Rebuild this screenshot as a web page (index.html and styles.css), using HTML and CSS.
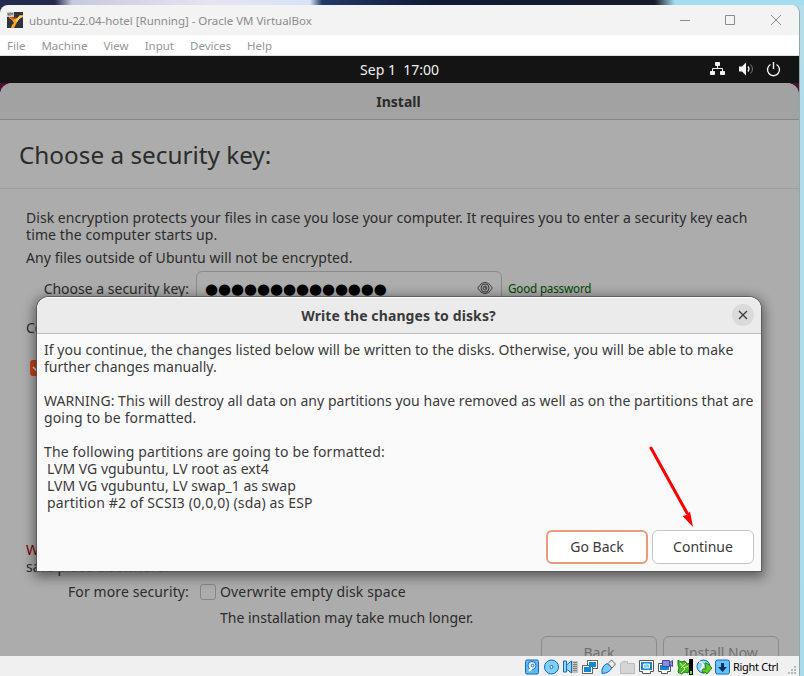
FILE: index.html
```html
<!DOCTYPE html>
<html lang="en">
<head>
<meta charset="utf-8">
<title>ubuntu-22.04-hotel [Running] - Oracle VM VirtualBox</title>
<link rel="stylesheet" href="styles.css">
</head>
<body>
<div class="vm">
  <header class="titlebar">
    <svg class="app-icon" width="16" height="16" viewBox="0 0 16 16"><rect width="16" height="16" fill="#30343c"/><path d="M3 3l4 4 3-1 3-3h3v2l-4 2-3 5-2 4H4l1-3 2-2-2-3-3-2z" fill="#f8a72c"/><path d="M4 3l3 3 2-1-2 3-4-2z" fill="#e84b16"/><path d="M9 8l4-4h3l-4 3-2 3z" fill="#ffd878"/><path d="M0 0h7v5H0z" fill="#c9c9c9"/><path d="M1 1v2h1V1m1 3V1h1l1 2 1-2" fill="none" stroke="#555" stroke-width=".7"/></svg>
    <span class="title">ubuntu-22.04-hotel [Running] - Oracle VM VirtualBox</span>
    <svg class="controls" width="104" height="12" viewBox="0 0 104 12"><path d="M0 6.5h10M45.5 1.5h9v9h-9zM91 1l10 10M101 1L91 11" fill="none" stroke="#8b8b8b"/></svg>
  </header>
  <nav class="menu"><span>File</span><span>Machine</span><span>View</span><span>Input</span><span>Devices</span><span>Help</span></nav>
  <div class="topbar">
    <span class="clock">Sep 1&nbsp; 17:00</span>
    <svg class="tray" width="72" height="16" viewBox="0 0 72 16"><g fill="#f2f2f2"><rect x="5" y="1" width="5" height="4" rx=".8"/><rect x="0" y="10" width="5" height="4" rx=".8"/><rect x="10" y="10" width="5" height="4" rx=".8"/><path d="M29 5.500h3l4-4v13l-4-4h-3z"/></g><g fill="none" stroke="#f2f2f2"><path d="M7.500 5v2.500M2.500 10V7.500h10V10"/><path d="M38 5.500q2 2.500 0 5" stroke-width="1.300"/><path d="M40.500 3.500q4 4.500 0 9" stroke="#777"/><path d="M60.500 3.500a6 6 0 1 0 6 0M63.500 1v7" stroke-width="1.400"/></g></svg>
  </div>
  <main class="screen">
    <div class="installer">
      <div class="installer-head">Install</div>
      <h1>Choose a security key:</h1>
      <div class="form">
        <p class="intro">Disk encryption protects your files in case you lose your computer. It requires you to enter a security key each</p>
        <p class="wide">time the computer starts up.</p>
        <p class="outside">Any files outside of Ubuntu will not be encrypted.</p>
        <div class="key-row"><label>Choose a security key:</label>
          <div class="entry"><span class="dots">●●●●●●●●●●●●●●</span>
            <svg width="16" height="14" viewBox="0 0 16 14" fill="none" stroke="#3b3b3b"><path d="M.7 7Q4 1.300 8 1.300T15.300 7Q12 12.700 8 12.700T.7 7z"/><circle cx="8" cy="7" r="4"/><circle cx="8" cy="7" r="1.900"/><path d="M8 5.500V7h1.500"/></svg></div>
          <span class="good">Good password</span></div>
        <p class="confirm">Confirm the security key:</p>
        <div class="check checked"><svg width="16" height="16" viewBox="0 0 16 16"><path d="M3 7l4 4 5-6" fill="none" stroke="#ddd" stroke-width="1.600"/></svg></div>
        <p class="warn">Warning:</p>
        <p class="wide">safe place elsewhere.</p>
        <div class="more"><label class="wide">For more security:</label><i class="check"></i><span class="wider">Overwrite empty disk space</span></div>
        <p class="note">The installation may take much longer.</p>
      </div>
      <div class="nav"><button>Back</button><button>Install Now</button></div>
    </div>
    <section class="dialog">
      <div class="dialog-head"><span class="wide">Write the changes to disks?</span>
        <i class="close"><svg width="10" height="10" viewBox="0 0 10 10"><path d="M1 1l8 8M9 1L1 9" stroke="#3d3d3d" stroke-width="1.300"/></svg></i></div>
      <div class="dialog-text">
        <p class="intro">If you continue, the changes listed below will be written to the disks. Otherwise, you will be able to make</p>
        <p>further changes manually.</p>
        <p class="para intro">WARNING: This will destroy all data on any partitions you have removed as well as on the partitions that are</p>
        <p class="wider">going to be formatted.</p>
        <p class="para wider">The following partitions are going to be formatted:</p>
        <p class="item">LVM VG vgubuntu, LV root as ext4</p>
        <p class="item">LVM VG vgubuntu, LV swap_1 as swap</p>
        <p class="item wider">partition #2 of SCSI3 (0,0,0) (sda) as ESP</p>
      </div>
      <div class="actions"><button class="focus">Go Back</button><button>Continue</button></div>
      <svg class="arrow" width="50" height="84" viewBox="0 0 50 84"><path d="M4 4L40 69" stroke="#fe0000" stroke-width="3" stroke-linecap="round"/><path d="M46 83l-10.500-11 4-1 3.500-3.500z" fill="#fe0000"/></svg>
    </section>
  </main>
  <footer class="status">
    <svg width="206" height="16" viewBox="0 0 206 16">
      <g stroke="#1769b8" fill="#5dbdf5">
        <rect x=".5" y="1" width="13" height="14" rx="1.500"/><circle cx="7" cy="6.500" r="4" fill="#eaf7ff"/><circle cx="7.500" cy="6.500" r="1.300" fill="#fff"/><path d="M4 12l3-3" stroke="#fff" stroke-width="2"/>
        <circle cx="26.500" cy="8" r="7" fill="#7ed1ff"/><circle cx="26.500" cy="8" r="1.500" fill="#fff"/>
      </g>
      <path d="M47 2h6v12h-6" fill="#c4c4c4"/><path d="M48 3.500h4M48 5.500h4M48 7.500h4M48 9.500h4M48 11.500h4" stroke="#808080"/><path d="M38.500 2h3v11h-3zM41.500 6l5-4v12l-5-4z" fill="#8ed8ff" stroke="#1769b8"/>
      <g stroke="#666" fill="#fff"><rect x="62.500" y="1.500" width="10" height="8"/><rect x="57.500" y="6.500" width="10" height="8"/></g><path d="M64 3h7v5h-7zM59 8h7v5h-7z" fill="#1387cf"/>
      <path d="M77 14.500q-1-7 5-10l5 4q-3 6-10 6z" fill="#77ccfb" stroke="#1769b8"/><path d="M83 4.500l3.500-3.500 4 4-3.500 4z" fill="#eee" stroke="#666"/>
      <path d="M95.500 4.500l2-2h5v2h7v10h-14z" fill="#d5d5d5" stroke="#bbb"/>
      <path d="M114.500 1.500h14v11h-3v2h-8v-2h-3z" fill="#fff" stroke="#555"/><path d="M116 3h11v8h-11z" fill="#1387cf"/><path d="M118.500 5h6v4h-6z" fill="#7cd0fa" stroke="#fff"/>
      <path d="M133.500 4.500h12v8h-3v2h-6v-2h-3z" fill="#fff" stroke="#555"/><path d="M135 6h9v5h-9z" fill="#1387cf"/><path d="M137.500 1.500h7v6h-7zM144.500 3.500l3-2v6l-3-2" fill="#8b8de0" stroke="#4446a5"/>
      <path d="M153 1l3 2 4-1 2 3 3-1v5l-2 5-3-1-4 2-3-2 1-4-1-3z" fill="#48bd26" stroke="#16750d"/><path d="M155 4l5 6-4 4M161 4l-5 5M159 9l4-2" stroke="#d6ff9a" fill="none"/><rect x="164" y="0" width="4" height="16" fill="#000"/><rect x="165" y="12" width="2" height="3" fill="#4f0"/>
      <circle cx="178.500" cy="7.500" r="6.500" fill="#8bd5ff" stroke="#1769b8"/><path d="M174 3q5 0 4 5l-3 3" stroke="#fff" stroke-width="1.500" fill="none"/><path d="M180 4l3 1 4 4-5 6-2-2-3 1 1-4h3z" fill="#62cc25" stroke="#29860e"/>
      <rect x="190.500" y="1" width="14" height="14" rx="2" fill="#65c3ff" stroke="#1769b8"/><path d="M196 4h3v4h3l-4.500 5L193 8h3z" fill="#082f5d"/>
    </svg>
    <span class="host">Right Ctrl</span>
    <svg class="grip" width="9" height="9" viewBox="0 0 9 9"><path d="M6 0h2v2H6zM3 3h2v2H3zM6 3h2v2H6zM0 6h2v2H0zM3 6h2v2H3zM6 6h2v2H6z" fill="#b9b9b9"/></svg>
  </footer>
</div>
</body>
</html>
```
FILE: styles.css
```css
* { box-sizing: border-box; }
body {
  margin: 0;
  width: 804px;
  height: 676px;
  overflow: hidden;
  padding-top: 5px;
  background: linear-gradient(#b3deea, #a9dbea) 799px 5px / 5px 671px no-repeat,
    linear-gradient(90deg, #222b50 0, #25294c 55px, #c8c8df 72px, #e6e3f2 210px, #d8e3f7 310px, #243969 322px, #101b36 430px, #181a2b 655px, #a4ddef 675px);
  font-family: "Noto Sans", sans-serif;
  font-size: 14px;
  line-height: 17px;
  color: #2b2b2b;
}
p, h1 { margin: 0; font-weight: 400; white-space: nowrap; }
span, label { white-space: nowrap; }
svg { display: block; flex: none; }
.intro { letter-spacing: .042px; }
.wide { letter-spacing: .11px; }
.wider { letter-spacing: .145px; }
.vm {
  width: 800px;
  height: 671px;
  display: flex;
  flex-direction: column;
  border-right: 1px solid #91a5ab;
  border-radius: 8px 8px 0 0;
  overflow: hidden;
}
.titlebar { height: 30px; flex: none; background: #f3f3f3; display: flex; align-items: center; padding-left: 7px; }
.title { flex: 1; margin-left: 6px; font-size: 11.5px; letter-spacing: -.02px; color: #8c8c8c; }
.controls { margin-right: 15px; }
.menu { height: 21px; flex: none; background: #fff; border-bottom: 1px solid #ddd; display: flex; align-items: center; gap: 16px; padding-left: 7px; font-size: 11.5px; color: #969696; }
.topbar { height: 27px; flex: none; background: #141414; color: #f0f0f0; display: grid; grid-template-columns: 1fr auto; align-items: center; padding-bottom: 1px; }
.clock { text-align: center; padding-left: 89px; }
.tray { margin-right: 17px; }
.screen { height: 573px; flex: none; position: relative; background: #4b1234; }
.installer { height: 573px; background: #acacac; border-radius: 12px 12px 0 0; overflow: hidden; }
.installer-head { height: 37px; background: #a2a2a2; border-bottom: 1px solid #868686; text-align: center; line-height: 37px; font-weight: 700; padding-right: 2px; }
h1 { height: 69px; border-bottom: 1px solid #9d9d9d; padding-left: 19px; line-height: 69px; font-size: 24.3px; }
.form { height: 447px; padding: 20px 26px 0; }
.outside { margin-top: 6px; letter-spacing: .065px; }
.key-row { display: flex; margin-top: 5px; height: 34px; line-height: 35px; }
.key-row label { width: 163px; text-align: right; margin-right: 7px; }
.entry { width: 306px; border: 1px solid #8a8a8a; border-radius: 6px; padding: 0 8px; display: flex; align-items: center; justify-content: space-between; background: #adadad; }
.dots { font: 15px/32px "DejaVu Sans", sans-serif; letter-spacing: -.1px; color: #000; padding-top: 2px; }
.good { margin-left: 6px; color: #004800; font-size: 11.7px; letter-spacing: -.2px; }
.confirm { margin-top: 14px; }
.check { display: block; flex: none; width: 16px; height: 16px; border: 1px solid #858585; border-radius: 3px; }
.checked { background: #c3461b; border: 0; margin: 24px 0 0 4px; }
.warn { margin-top: 165px; color: #790000; }
.more { display: flex; margin-top: 8px; }
.more label { width: 163px; text-align: right; margin-right: 11px; }
.more .check { margin-right: 4px; margin-top: 1px; }
.note { margin: 9px 0 0 194px; }
.nav { display: flex; justify-content: flex-end; gap: 6px; padding-right: 20px; }
button { font: inherit; color: inherit; background: none; padding: 0 0 2px; }
.nav button { width: 116px; height: 34px; border: 1px solid #8c8c8c; border-radius: 6px; color: #707070; }
.dialog { position: absolute; left: 37px; top: 214px; width: 724px; height: 274px; background: #fafafa; border-radius: 12px 12px 0 0; color: #3a3a3a; box-shadow: 0 0 0 1px #555c, 0 3px 12px 3px #0007; }
.dialog-head { height: 37px; background: #ebebeb; border-bottom: 1px solid #bdbdbd; border-top: 1px solid #fff; border-radius: 12px 12px 0 0; text-align: center; line-height: 36px; font-weight: 700; display: grid; grid-template-columns: 36px 1fr 36px; }
.dialog-head span { grid-column: 2; justify-self: center; margin-right: 1px; }
.close { width: 22px; height: 22px; margin: 6px 0 0 7px; background: #dadada; border-radius: 50%; display: grid; place-items: center; }
.dialog-text { padding: 7px 7px 0; height: 196px; }
.para { margin-top: 17px; }
.item { margin-left: 3px; }
.actions { display: flex; justify-content: flex-end; gap: 4px; padding-right: 7px; }
.actions button { width: 102px; height: 34px; background: #fff; border: 1px solid #c6c6c6; border-radius: 6px; }
.actions .focus { border: 2px solid #e99a7b; }
.arrow { position: absolute; left: 610px; top: 147px; }
.status { height: 20px; flex: none; background: #f0f0f0; display: flex; align-items: center; padding: 2px 2px 1px 525px; color: #000; font-size: 11px; }
.host { margin-left: 2px; flex: 1; letter-spacing: -.3px; }
.grip { align-self: flex-end; }
```
